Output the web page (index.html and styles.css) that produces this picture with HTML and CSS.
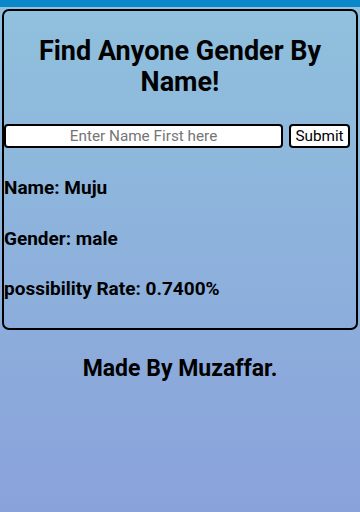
FILE: index.html
```html
<!DOCTYPE html>
<html>
<head>
<meta charset="utf-8">
<link rel="stylesheet" href="styles.css">
</head>
<body>
<div class="topbar"></div>
<div class="page">
  <div class="card">
    <h1 class="title">Find Anyone Gender By Name!</h1>
    <form class="form">
      <input class="name-input" type="text" placeholder="Enter Name First here">
      <button class="submit" type="button">Submit</button>
    </form>
    <div class="results">
      <h3 class="result">Name: Muju</h3>
      <h3 class="result">Gender: male</h3>
      <h3 class="result">possibility Rate: 0.7400%</h3>
    </div>
  </div>
  <h2 class="footer">Made By Muzaffar.</h2>
</div>
</body>
</html>
```
FILE: styles.css
```css
html, body {
  margin: 0;
  padding: 0;
  min-height: 100%;
}
body {
  font-family: Roboto, "Liberation Sans", sans-serif;
  color: #000;
  background: linear-gradient(to bottom, #90c1dd 0%, #8aa2db 100%);
  min-height: 512px;
}
.topbar {
  height: 7px;
  background: #0a88c9;
}
.page {
  padding: 2px;
}
.card {
  border: 2px solid #000;
  border-radius: 7px;
  padding: 0 0 23px 0;
}
.title {
  font-size: 27px;
  line-height: 31px;
  font-weight: 700;
  text-align: center;
  margin: 25px 16px 26px;
}
.form {
  display: flex;
  align-items: center;
  gap: 6px;
  padding: 0 6px 0 0;
  margin: 0;
}
.name-input {
  width: 279px;
  height: 24px;
  box-sizing: border-box;
  border: 2px solid #000;
  border-radius: 4px;
  background: #fff;
  font-family: Roboto, "Liberation Sans", sans-serif;
  font-size: 15.3px;
  text-align: center;
  padding: 0;
  margin: 0;
}
.name-input::placeholder {
  color: #757575;
}
.submit {
  width: 61px;
  height: 24px;
  box-sizing: border-box;
  border: 2px solid #000;
  border-radius: 4px;
  background: #fff;
  font-family: Roboto, "Liberation Sans", sans-serif;
  font-size: 15.3px;
  color: #000;
  padding: 0;
  margin: 0;
}
.results {
  padding-top: 6px;
}
.result {
  font-size: 19px;
  font-weight: 700;
  margin: 18px 0 0 0;
  line-height: 32px;
  height: 32px;
  margin-bottom: 18.5px;
}
.results .result:last-child {
  margin-bottom: 0;
}
.footer {
  font-size: 23px;
  font-weight: 700;
  text-align: center;
  margin: 25px 0 0;
}
```
